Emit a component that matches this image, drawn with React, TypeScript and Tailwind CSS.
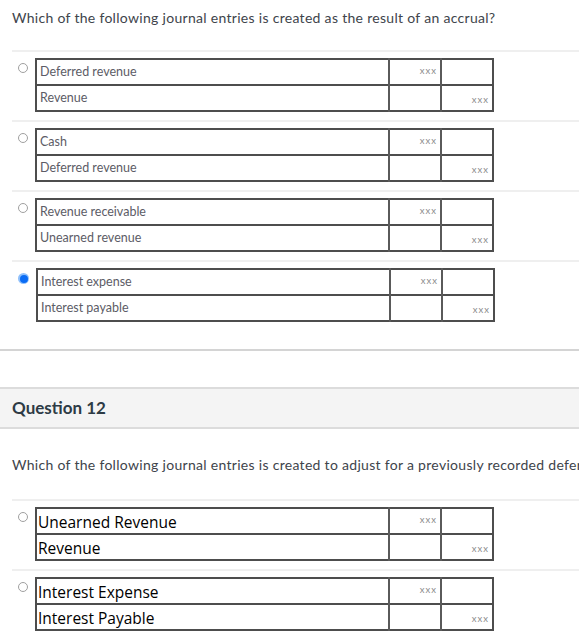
type Entry = { debit: string; credit: string };

const q11: { entry: Entry; selected?: boolean }[] = [
  { entry: { debit: 'Deferred revenue', credit: 'Revenue' } },
  { entry: { debit: 'Cash', credit: 'Deferred revenue' } },
  { entry: { debit: 'Revenue receivable', credit: 'Unearned revenue' } },
  { entry: { debit: 'Interest expense', credit: 'Interest payable' }, selected: true },
];

const q12: Entry[] = [
  { debit: 'Unearned Revenue', credit: 'Revenue' },
  { debit: 'Interest Expense', credit: 'Interest Payable' },
];

function Radio({ selected }: { selected?: boolean }) {
  if (selected) {
    return (
      <span className="mt-[5px] flex h-[11px] w-[11px] shrink-0 items-center justify-center rounded-full bg-[#8fc0fb]">
        <span className="h-[8px] w-[8px] rounded-full bg-[#0a6cf5]" />
      </span>
    );
  }
  return <span className="mt-[5px] h-[10px] w-[10px] shrink-0 rounded-full border border-[#a0a0a0] bg-white" />;
}

function JournalTable({ entry, big }: { entry: Entry; big?: boolean }) {
  const label = big
    ? 'pl-[1px] text-[15.5px] leading-[22px] text-black align-bottom'
    : 'pl-[3px] text-[12.5px] text-[#5c5c66]';
  const labelFont = big ? { fontFamily: '"Open Sans", sans-serif' } : undefined;
  return (
    <table className="w-[457px] table-fixed border-collapse border-2 border-[#4d4d4d]">
      <colgroup>
        <col className="w-[353px]" />
        <col className="w-[52px]" />
        <col className="w-[52px]" />
      </colgroup>
      <tbody>
        <tr className="h-[26px] border-b-2 border-[#4d4d4d]">
          <td className={label} style={labelFont}>
            {entry.debit}
          </td>
          <td className="border-l-2 border-[#5a5a5a] pr-[3px] text-right align-top pt-[4px] text-[9.5px] tracking-[1px] text-[#8a8a8a]">
            xxx
          </td>
          <td className="border-l-2 border-[#5a5a5a]" />
        </tr>
        <tr className="h-[26px]">
          <td className={label} style={labelFont}>
            {entry.credit}
          </td>
          <td className="border-l-2 border-[#5a5a5a]" />
          <td className="border-l-2 border-[#5a5a5a] pr-[3px] text-right align-bottom pb-[3px] text-[9.5px] tracking-[1px] text-[#8a8a8a]">
            xxx
          </td>
        </tr>
      </tbody>
    </table>
  );
}

function Option({ entry, selected, big }: { entry: Entry; selected?: boolean; big?: boolean }) {
  return (
    <div className="ml-[12px] border-t-2 border-[#efefef] pt-[6px] pb-[8px]">
      <div className="flex items-start gap-[7px] pl-[6px]">
        <Radio selected={selected} />
        <JournalTable entry={entry} big={big} />
      </div>
    </div>
  );
}

export default function App() {
  return (
    <div className="min-h-[644px] w-[579px] overflow-hidden bg-white" style={{ fontFamily: 'Lato, "Open Sans", sans-serif' }}>
      {/* Question 11 */}
      <p className="h-[50px] pl-[12px] pt-[9px] text-[14px] tracking-[0.3px] leading-[18px] text-[#40444b]">
        Which of the following journal entries is created as the result of an accrual?
      </p>
      {q11.map((o, i) => (
        <Option key={i} entry={o.entry} selected={o.selected} />
      ))}

      <div className="mt-[19px] h-[38px] border-t-2 border-[#d4d4d4]" />

      {/* Question 12 header */}
      <div className="flex h-[42px] items-center border-y-2 border-[#dcdcdc] bg-[#f4f4f4] pl-[12px]">
        <h2 className="text-[17px] font-bold text-[#2d3b45]">Question 12</h2>
      </div>

      <p className="h-[70px] whitespace-nowrap pl-[12px] pt-[27px] text-[14px] tracking-[0.3px] leading-[18px] text-[#40444b]">
        Which of the following journal entries is created to adjust for a previously recorded deferral?
      </p>
      {q12.map((e, i) => (
        <Option key={i} entry={e} big />
      ))}
    </div>
  );
}
